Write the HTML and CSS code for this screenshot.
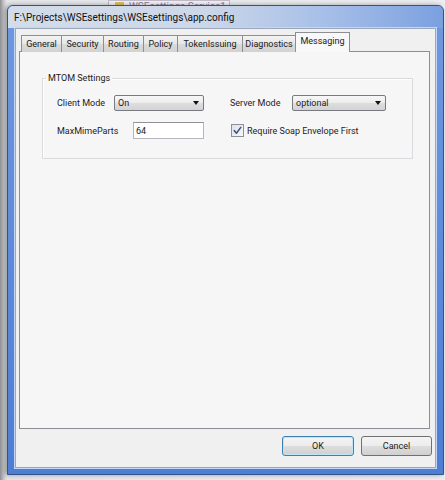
FILE: index.html
```html
<!DOCTYPE html>
<html>
<head>
<meta charset="utf-8">
<link rel="stylesheet" href="styles.css">
</head>
<body>
<div class="desktop">
  <div class="behind">
    <div class="behind-tab"><span class="behind-icon"></span><span class="behind-text">WSEsettings Service1</span></div>
  </div>
  <div class="window">
    <div class="titlebar">F:\Projects\WSEsettings\WSEsettings\app.config</div>
    <div class="frame">
      <div class="client">
        <div class="tabs">
          <div class="tab t-general">General</div>
          <div class="tab t-security">Security</div>
          <div class="tab t-routing">Routing</div>
          <div class="tab t-policy">Policy</div>
          <div class="tab t-token">TokenIssuing</div>
          <div class="tab t-diag">Diagnostics</div>
          <div class="tab tab-active t-msg">Messaging</div>
        </div>
        <div class="panel">
          <div class="group">
            <div class="group-title">MTOM Settings</div>
            <div class="fields">
              <div class="field">
                <span class="lbl lbl-client">Client Mode</span>
                <div class="combo combo-client"><span class="combo-text">On</span><span class="arrow"></span></div>
              </div>
              <div class="field">
                <span class="lbl lbl-server">Server Mode</span>
                <div class="combo combo-server"><span class="combo-text">optional</span><span class="arrow"></span></div>
              </div>
              <div class="field">
                <span class="lbl lbl-max">MaxMimeParts</span>
                <div class="textbox">64</div>
              </div>
              <div class="field field-check">
                <span class="checkbox">
                  <svg width="9" height="9" viewBox="0 0 9 9"><path d="M1.2 4.6 L3.4 7.2 L7.8 1.4" fill="none" stroke="#3d4f86" stroke-width="1.5" stroke-linecap="round" stroke-linejoin="round"/></svg>
                </span>
                <span class="check-label">Require Soap Envelope First</span>
              </div>
            </div>
          </div>
        </div>
        <div class="buttons">
          <button class="btn btn-default">OK</button>
          <button class="btn btn-cancel">Cancel</button>
        </div>
      </div>
    </div>
  </div>
</div>
</body>
</html>
```

FILE: styles.css
```css
* { box-sizing: border-box; }
html, body { margin: 0; padding: 0; }
body {
  width: 445px;
  height: 480px;
  overflow: hidden;
  font-family: Roboto, "Liberation Sans", sans-serif;
  font-size: 9px;
  color: #1c1c1c;
  background: linear-gradient(to right, #8d8f94 0, #c9cacd 4px, #e6e7ea 7px, #eceef1 100%);
}
.desktop { display: flex; flex-direction: column; height: 480px; }

.behind { height: 5px; overflow: hidden; display: flex; padding-left: 108px; }
.behind-tab {
  width: 122px; height: 6px;
  background: #f6f3f6;
  border: 1px solid #c2bccb; border-bottom: none;
  display: flex; align-items: flex-start;
  padding-left: 6px;
  overflow: hidden;
}
.behind-icon { width: 9px; height: 6px; background: #e0c060; margin: 1px 5px 0 0; flex: none; }
.behind-text {
  display: block;
  height: 4px;
  overflow: hidden;
  font-size: 10px; line-height: 12px; color: #8a7ea3;
  white-space: nowrap;
}

.window {
  margin-left: 7px;
  width: 437px;
  height: 470px;
  display: flex; flex-direction: column;
  background: #5583d6;
  border: 1px solid #35538a;
  border-radius: 6px 6px 0 0;
  box-shadow: -2px 0 5px rgba(0,0,0,.35);
}
.titlebar {
  height: 22px;
  padding-left: 6px;
  display: flex; align-items: center;
  font-size: 10px;
  color: #101010;
  background: linear-gradient(to right, #d3dce9 0%, #ccd7e8 45%, #a8c0e8 72%, #7ba0e0 100%);
  border-radius: 5px 5px 0 0;
}
.frame {
  flex: 1;
  display: flex;
  padding: 0 7px 6px 7px;
  background: linear-gradient(to bottom, #6e97de, #4e7dd4);
}
.client {
  flex: 1;
  display: flex; flex-direction: column;
  background: #f0f0f0;
  border: 1px solid #9ba8bc;
  box-shadow: 0 0 0 1px #c4d6f4;
  padding: 4px 3px 0 3px;
}

.tabs {
  display: flex; align-items: flex-end;
  height: 19px;
  padding-left: 2px;
  margin-bottom: -1px;
  position: relative; z-index: 1;
}
.tab {
  height: 17px;
  display: flex; align-items: center; justify-content: center;
  border: 1px solid #8c8e94; border-bottom: none;
  margin-right: -1px;
  background: linear-gradient(#f4f4f4, #e6e6e6 50%, #dadada 51%, #d2d2d2);
  color: #202020;
  white-space: nowrap;
}
.t-general { width: 41px; }
.t-security { width: 43px; }
.t-routing { width: 41px; }
.t-policy { width: 35px; }
.t-token { width: 66px; }
.t-diag { width: 54px; }
.t-msg { width: 55px; }
.tab-active {
  height: 20px;
  background: #f8f8f8;
  align-items: flex-start;
  padding-top: 3px;
}

.panel {
  height: 378px;
  margin-right: 2px;
  border: 1px solid #8c8e94;
  background: #f6f6f6;
  padding: 26px 0 0 22px;
}
.group {
  width: 371px;
  border: 1px solid #d9dbde;
  box-shadow: inset 1px 1px 0 #fff;
  display: flex; flex-direction: column;
  padding-bottom: 19px;
}
.group-title {
  align-self: flex-start;
  margin: -7px 0 0 3px;
  padding: 0 2px;
  line-height: 13px;
  background: #f6f6f6;
}
.fields {
  display: grid;
  grid-template-columns: 173px auto;
  row-gap: 11px;
  margin-top: 10px;
  padding-left: 14px;
}
.field { display: flex; align-items: center; }
.lbl-client { width: 57px; }
.lbl-server { width: 62px; }
.lbl-max { width: 76px; }

.combo {
  height: 16px;
  display: flex; align-items: center; justify-content: space-between;
  border: 1px solid #777a80;
  border-radius: 2px;
  background: linear-gradient(#f7f7f7, #ececec 50%, #dedede 51%, #d3d3d3);
  padding: 0 4px 0 3px;
}
.combo-client { width: 90px; }
.combo-server { width: 94px; }
.arrow {
  width: 0; height: 0;
  border-left: 3.5px solid transparent;
  border-right: 3.5px solid transparent;
  border-top: 4px solid #111;
}
.textbox {
  width: 71px; height: 17px;
  display: flex; align-items: center;
  background: #fff;
  border: 1px solid #b3b6bd;
  border-top-color: #8e9198;
  padding-left: 2px;
}
.field-check { margin-left: 1px; }
.checkbox {
  width: 13px; height: 13px;
  display: flex; align-items: center; justify-content: center;
  border: 1px solid #8d9096;
  background: linear-gradient(135deg, #dde3ea, #f6f7f9);
  margin-right: 3px;
}
.checkbox svg { display: block; }

.buttons {
  display: flex; justify-content: flex-end;
  gap: 7px;
  margin-top: 7px;
}
.btn {
  height: 20px;
  margin: 0;
  padding: 0;
  font: inherit;
  color: #1c1c1c;
  border: 1px solid #707070;
  border-radius: 3px;
  background: linear-gradient(#f4f4f4, #ececec 50%, #dddddd 51%, #d0d0d0);
}
.btn-default {
  width: 72px;
  border-color: #3c7fb1;
  box-shadow: inset 0 0 0 1px #bfe5f8;
}
.btn-cancel { width: 71px; }
```
